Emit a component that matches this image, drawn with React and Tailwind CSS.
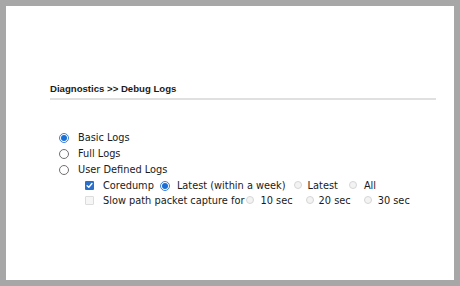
import React from 'react';

const Radio = ({ checked, disabled }) => {
  if (checked) {
    return (
      <span className="inline-flex h-[10px] w-[10px] shrink-0 items-center justify-center rounded-full border border-[#3d82d6] bg-white">
        <span className="h-[6px] w-[6px] rounded-full bg-[#1a6fd6]" />
      </span>
    );
  }
  if (disabled) {
    return <span className="inline-block h-[8px] w-[8px] shrink-0 rounded-full border border-[#d6d6d6] bg-[#f3f3f3]" />;
  }
  return <span className="inline-block h-[10px] w-[10px] shrink-0 rounded-full border border-[#707070] bg-white" />;
};

const Checkbox = ({ checked }) =>
  checked ? (
    <span className="inline-flex h-[9px] w-[9px] shrink-0 items-center justify-center rounded-[1px] bg-[#2a6fc9]">
      <svg width="7" height="7" viewBox="0 0 8 8" fill="none" stroke="white" strokeWidth="1.6" strokeLinecap="round" strokeLinejoin="round">
        <path d="M1.3 4.2 3.2 6 6.8 1.8" />
      </svg>
    </span>
  ) : (
    <span className="inline-block h-[9px] w-[9px] shrink-0 rounded-[1px] border border-[#dcdcdc] bg-[#f6f6f6]" />
  );

export default function App() {
  return (
    <div className="h-[286px] w-[460px] bg-[#a7a7a7] p-[6px]">
      <div className="h-full w-full bg-white pl-[44px] pr-[18px] pt-[76px] text-[#1a1a1a]">
        {/* page title */}
        <div className="border-b-2 border-[#e0e0e0] pb-[2px] font-['Liberation_Sans',Arial,sans-serif] text-[9.6px] font-bold leading-[14px]">
          Diagnostics &gt;&gt; Debug Logs
        </div>

        <div className="mt-[30px] font-['DejaVu_Sans',Verdana,sans-serif] text-[9.8px] leading-[16px]">
          <div className="flex h-[16px] items-center pl-[9px]">
            <Radio checked />
            <span className="ml-[9px]">Basic Logs</span>
          </div>
          <div className="flex h-[16px] items-center pl-[9px]">
            <Radio />
            <span className="ml-[9px]">Full Logs</span>
          </div>
          <div className="flex h-[16px] items-center pl-[9px]">
            <Radio />
            <span className="ml-[9px]">User Defined Logs</span>
          </div>

          <div className="flex h-[15px] items-center pl-[35px]">
            <Checkbox checked />
            <span className="ml-[9px]">Coredump</span>
            <span className="ml-[6px]"><Radio checked /></span>
            <span className="ml-[7px]">Latest (within a week)</span>
            <span className="ml-[8px]"><Radio disabled /></span>
            <span className="ml-[6px]">Latest</span>
            <span className="ml-[11px]"><Radio disabled /></span>
            <span className="ml-[7px]">All</span>
          </div>
          <div className="flex h-[15px] items-center pl-[35px]">
            <Checkbox />
            <span className="ml-[9px]">Slow path packet capture for</span>
            <span className="ml-[2px]"><Radio disabled /></span>
            <span className="ml-[6px]">10 sec</span>
            <span className="ml-[13px]"><Radio disabled /></span>
            <span className="ml-[5px]">20 sec</span>
            <span className="ml-[13px]"><Radio disabled /></span>
            <span className="ml-[6px]">30 sec</span>
          </div>
        </div>
      </div>
    </div>
  );
}
